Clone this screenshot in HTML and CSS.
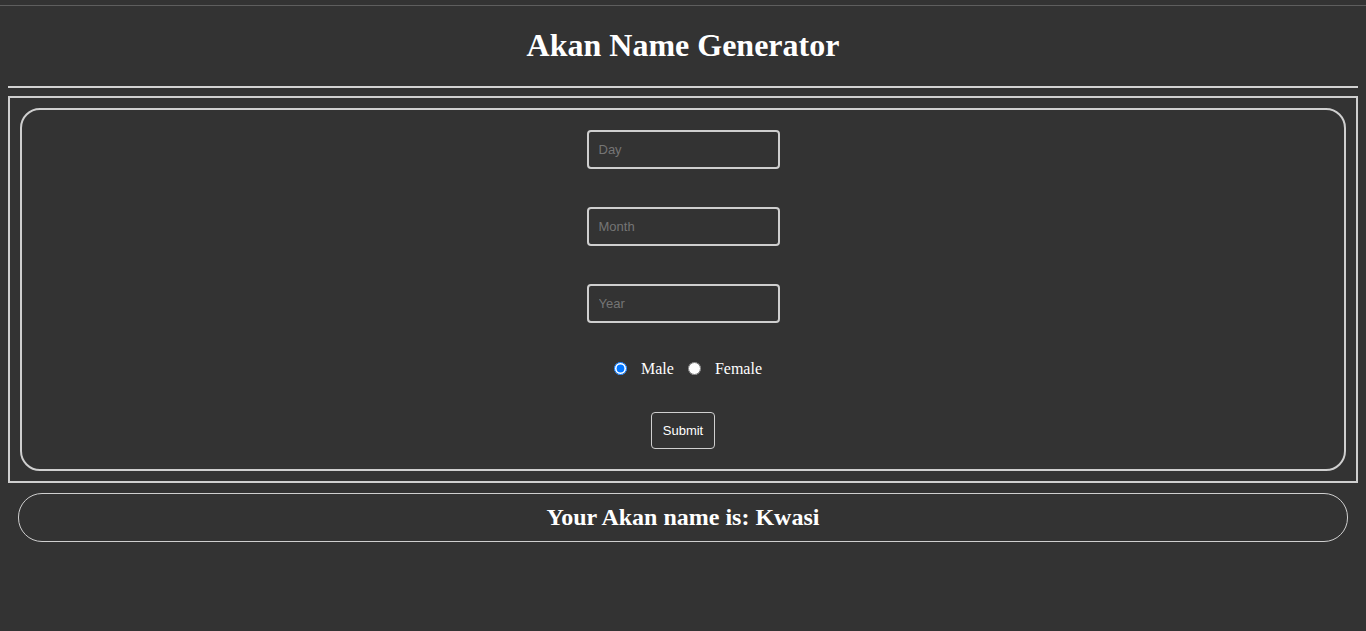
FILE: index.html
```html
<!DOCTYPE html>
<html lang="en">
<head>
<meta charset="utf-8">
<title>Akan Name Generator</title>
<link rel="stylesheet" href="styles.css">
</head>
<body>
<div class="topbar"></div>
<main class="page">
  <h1 class="title">Akan Name Generator</h1>
  <div class="rule"></div>
  <section class="frame">
    <form class="card">
      <input class="field" type="text" placeholder="Day">
      <input class="field" type="text" placeholder="Month">
      <input class="field" type="text" placeholder="Year">
      <div class="gender">
        <input class="radio" type="radio" name="gender" id="male" checked>
        <label class="gender-label" for="male">Male</label>
        <input class="radio radio-second" type="radio" name="gender" id="female">
        <label class="gender-label" for="female">Female</label>
      </div>
      <button class="submit" type="button">Submit</button>
    </form>
  </section>
  <div class="result">
    <h2 class="result-text">Your Akan name is: Kwasi</h2>
  </div>
</main>
</body>
</html>
```

FILE: styles.css
```css
html, body {
  margin: 0;
  padding: 0;
  background: #333333;
  color: #ffffff;
  font-family: "Liberation Serif", "Times New Roman", serif;
}

.topbar {
  height: 5px;
  border-bottom: 1px solid #5e5e5e;
}

.page {
  padding: 0 8px;
}

.title {
  margin: 21px 0 22px;
  font-size: 32px;
  font-weight: bold;
  text-align: center;
  line-height: 37px;
}

.rule {
  height: 2px;
  background: #d2d2d2;
  margin-bottom: 8px;
}

.frame {
  border: 2px solid #cfcfcf;
  padding: 10px;
}

.card {
  margin: 0;
  border: 2px solid #cfcfcf;
  border-radius: 20px;
  padding: 20px 0 20px;
  display: flex;
  flex-direction: column;
  align-items: center;
}

.field {
  box-sizing: border-box;
  width: 193px;
  height: 39px;
  margin: 0 0 38px;
  padding: 0 10px;
  background: #333333;
  border: 2px solid #cfcfcf;
  border-radius: 4px;
  color: #ffffff;
  font-family: "Liberation Sans", Arial, sans-serif;
  font-size: 13px;
  outline: none;
}

.field::placeholder {
  color: #757575;
}

.gender {
  display: flex;
  align-items: center;
  height: 20px;
  margin-top: -3px;
  padding-left: 10px;
  font-size: 16px;
}

.radio {
  width: 13px;
  height: 13px;
  margin: 0;
}

.radio-second {
  margin-left: 14px;
}

.gender-label {
  margin-left: 14px;
  padding-top: 2px;
}

.submit {
  box-sizing: border-box;
  margin-top: 34px;
  height: 37px;
  padding: 0 11px;
  background: #333333;
  color: #ffffff;
  border: 1px solid #cfcfcf;
  border-radius: 4px;
  font-family: "Liberation Sans", Arial, sans-serif;
  font-size: 13px;
}

.result {
  margin: 10px 10px 0;
  height: 49px;
  box-sizing: border-box;
  border: 1px solid #cfcfcf;
  border-radius: 24px;
  display: flex;
  align-items: center;
  justify-content: center;
}

.result-text {
  margin: 0;
  font-size: 24px;
  font-weight: bold;
}
```
